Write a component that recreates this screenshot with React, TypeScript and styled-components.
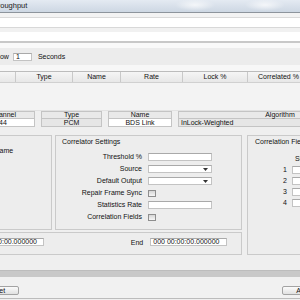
import React from 'react';
import styled, { createGlobalStyle } from 'styled-components';

const GlobalStyle = createGlobalStyle`
  html, body {
    margin: 0;
    padding: 0;
    width: 300px;
    height: 300px;
    overflow: hidden;
    background: #efefef;
  }
  body {
    font-family: "Liberation Sans", Arial, sans-serif;
    font-size: 7px;
    color: #111;
  }
  * { box-sizing: border-box; }
`;

// the window sits partly off the left edge of the screen
const Window = styled.div`
  margin-left: -60px;
  width: 440px;
  height: 300px;
  display: flex;
  flex-direction: column;
  background: #efefef;
`;

const TitleBar = styled.div`
  flex-shrink: 0;
  height: 13px;
  padding-left: 49px;
  border-bottom: 1px solid #8d949c;
  background:
    radial-gradient(ellipse 20px 6px at 255px 5px, rgba(255,255,255,0.7), transparent),
    radial-gradient(ellipse 20px 6px at 325px 5px, rgba(255,255,255,0.7), transparent),
    linear-gradient(to bottom, #e4eaf2, #cdd7e3);
  font-size: 7.5px;
  line-height: 12px;
  color: #1a1a1a;
`;

const Band = styled.div<{ $h: number; $bg: string; $line?: string; $lineW?: number }>`
  flex-shrink: 0;
  height: ${({ $h, $line, $lineW }) => $h + ($line ? $lineW || 1 : 0)}px;
  background: ${({ $bg }) => $bg};
  border-bottom: ${({ $line, $lineW }) => ($line ? `${$lineW || 1}px solid ${$line}` : 'none')};
`;

const WindowRow = styled.div`
  flex-shrink: 0;
  height: 17px;
  display: flex;
  align-items: center;
  padding-left: 44px;
  background: #ececec;
`;

const Label = styled.span<{ $gap?: number }>`
  margin-left: ${({ $gap }) => $gap || 0}px;
  white-space: nowrap;
`;

const TextBox = styled.div<{ $w: number; $ml?: number }>`
  width: ${({ $w }) => $w}px;
  height: 8px;
  margin-left: ${({ $ml }) => $ml || 0}px;
  padding-left: 2px;
  background: #fff;
  border: 1px solid #c3c3c3;
  border-top-color: #a9a9a9;
  line-height: 6px;
  white-space: nowrap;
  overflow: hidden;
`;

const TableHeader = styled.div`
  flex-shrink: 0;
  height: 10px;
  display: flex;
  background: linear-gradient(to bottom, #f5f5f5, #e7e7e7);
`;

const HeadCell = styled.div<{ $w?: number }>`
  width: ${({ $w }) => ($w ? `${$w}px` : 'auto')};
  flex: ${({ $w }) => ($w ? '0 0 auto' : '1')};
  border-right: 1px solid #c9c9c9;
  text-align: center;
  line-height: 10px;
  white-space: nowrap;
`;

const TableBody = styled.div`
  flex-shrink: 0;
  height: 29px;
  background: #f3f3f3;
  border-top: 1px solid #d0d0d0;
  border-bottom: 1px solid #e2e2e2;
`;

const ChannelGrid = styled.div`
  flex-shrink: 0;
  display: grid;
  grid-template-columns: 64px 61px 64px 204px;
  grid-template-rows: 8px 8px;
  column-gap: 6px;
  padding-left: 31px;
`;

const GridHead = styled.div`
  background: #e9e9e9;
  border: 1px solid #c4c4c4;
  text-align: center;
  line-height: 6px;
  white-space: nowrap;
`;

const GridValue = styled.div<{ $grey?: boolean; $left?: boolean }>`
  background: ${({ $grey }) => ($grey ? '#e6e6e6' : '#fff')};
  border: 1px solid #c4c4c4;
  border-top: none;
  text-align: ${({ $left }) => ($left ? 'left' : 'center')};
  padding-left: ${({ $left }) => ($left ? '2px' : '0')};
  line-height: 7px;
  white-space: nowrap;
`;

const MainArea = styled.div`
  flex-shrink: 0;
  height: 120px;
  margin-top: 8px;
  display: flex;
  gap: 5px;
`;

const LeftColumn = styled.div`
  width: 302px;
  display: flex;
  flex-direction: column;
  gap: 2px;
`;

const GroupsRow = styled.div`
  height: 95px;
  display: flex;
  gap: 3px;
`;

const Group = styled.div<{ $w?: number }>`
  width: ${({ $w }) => ($w ? `${$w}px` : 'auto')};
  flex: ${({ $w }) => ($w ? '0 0 auto' : '1')};
  border: 1px solid #cacaca;
  background: #ededed;
`;

const FrameGroup = styled(Group)`
  padding: 11px 0 0 52px;
`;

const SettingsGroup = styled(Group)`
  padding: 2px 0 0 6px;
`;

const FieldsGroup = styled(Group)`
  padding: 2px 0 0 7px;
`;

const GroupTitle = styled.div`
  line-height: 8px;
  white-space: nowrap;
`;

const Form = styled.div`
  display: grid;
  grid-template-columns: 80px 64px;
  grid-auto-rows: 8px;
  column-gap: 6px;
  row-gap: 4px;
  margin-top: 7px;
`;

const FormLabel = styled.div`
  text-align: right;
  line-height: 8px;
  white-space: nowrap;
`;

const Select = styled.div`
  display: flex;
  align-items: center;
  justify-content: flex-end;
  padding-right: 3px;
  background: #fff;
  border: 1px solid #c3c3c3;
  border-top-color: #a9a9a9;
`;

const Check = styled.div`
  width: 8px;
  height: 7px;
  align-self: center;
  border: 1px solid #8e8e8e;
  background: linear-gradient(to bottom, #d6d6d6, #f6f6f6);
`;

const FieldsGrid = styled.div`
  display: grid;
  grid-template-columns: 9px 62px;
  grid-auto-rows: 8px;
  row-gap: 3px;
  margin: 9px 0 0 28px;
`;

const FieldHead = styled.div`
  grid-column: 2;
  padding-left: 3px;
  line-height: 8px;
  margin-bottom: -2px;
`;

const FieldNum = styled.div`
  line-height: 8px;
`;

const FieldInput = styled.div`
  background: #fff;
  border: 1px solid #c3c3c3;
  border-top-color: #a9a9a9;
`;

const TimeBox = styled.div`
  height: 23px;
  display: flex;
  align-items: center;
  padding: 0 0 3px 8px;
  border: 1px solid #cacaca;
  background: #ededed;
`;

const GreyBar = styled.div`
  flex-shrink: 0;
  height: 7px;
  background: #c9c9c9;
  border-top: 1px solid #bdbdbd;
`;

const ButtonBar = styled.div`
  flex-shrink: 0;
  height: 22px;
  display: flex;
  justify-content: space-between;
  align-items: flex-start;
  padding: 9px 2px 0 33px;
  border-bottom: 1px solid #bcbcbc;
  background: #f1f1f1;
`;

const ButtonGroup = styled.div`
  display: flex;
  gap: 4px;
`;

const Button = styled.div`
  width: 46px;
  height: 9px;
  border: 1px solid #a3a3a3;
  border-radius: 2px;
  background: linear-gradient(to bottom, #fbfbfb, #e1e1e1);
  text-align: center;
  line-height: 7px;
`;

const Arrow = () => (
  <svg width="5" height="3" viewBox="0 0 5 3">
    <path d="M0 0h5L2.5 3z" fill="#333" />
  </svg>
);

const columns = [
  { name: 'Channel', w: 76 },
  { name: 'Type', w: 57 },
  { name: 'Name', w: 48 },
  { name: 'Rate', w: 62 },
  { name: 'Lock %', w: 65 },
  { name: 'Correlated %', w: 62 },
];

const App: React.FC = () => {
  return (
    <>
      <GlobalStyle />
      <Window>
        <TitleBar>Throughput</TitleBar>
        <Band $h={4} $bg="#f3f3f3" $line="#dadada" />
        <Band $h={9} $bg="#ffffff" $line="#d8d8d8" />
        <Band $h={4} $bg="#f1f1f1" />
        <Band $h={9} $bg="#ffffff" $line="#c8c8c8" $lineW={2} />
        <Band $h={5} $bg="#f9f9f9" />
        <WindowRow>
          <Label>Window</Label>
          <TextBox $w={19} $ml={4}>1</TextBox>
          <Label $gap={6}>Seconds</Label>
        </WindowRow>
        <Band $h={6} $bg="#f7f7f7" $line="#bcbcbc" />
        <TableHeader>
          {columns.map((c) => (
            <HeadCell key={c.name} $w={c.w}>{c.name}</HeadCell>
          ))}
          <HeadCell />
        </TableHeader>
        <TableBody />
        <ChannelGrid>
          <GridHead>Channel</GridHead>
          <GridHead>Type</GridHead>
          <GridHead>Name</GridHead>
          <GridHead>Algorithm</GridHead>
          <GridValue>44</GridValue>
          <GridValue $grey>PCM</GridValue>
          <GridValue>BDS Link</GridValue>
          <GridValue $grey $left>InLock-Weighted</GridValue>
        </ChannelGrid>
        <MainArea>
          <LeftColumn>
            <GroupsRow>
              <FrameGroup $w={112}>
                <GroupTitle>Frame</GroupTitle>
              </FrameGroup>
              <SettingsGroup>
                <GroupTitle>Correlator Settings</GroupTitle>
                <Form>
                  <FormLabel>Threshold %</FormLabel>
                  <TextBox $w={64} />
                  <FormLabel>Source</FormLabel>
                  <Select><Arrow /></Select>
                  <FormLabel>Default Output</FormLabel>
                  <Select><Arrow /></Select>
                  <FormLabel>Repair Frame Sync</FormLabel>
                  <Check />
                  <FormLabel>Statistics Rate</FormLabel>
                  <TextBox $w={64} />
                  <FormLabel>Correlation Fields</FormLabel>
                  <Check />
                </Form>
              </SettingsGroup>
            </GroupsRow>
            <TimeBox>
              <Label>Start</Label>
              <TextBox $w={76} $ml={4}>000 00:00:00.000000</TextBox>
              <Label $gap={87}>End</Label>
              <TextBox $w={77} $ml={7}>000 00:00:00.000000</TextBox>
            </TimeBox>
          </LeftColumn>
          <FieldsGroup>
            <GroupTitle>Correlation Fields</GroupTitle>
            <FieldsGrid>
              <FieldHead>Size</FieldHead>
              {[1, 2, 3, 4].map((n) => (
                <React.Fragment key={n}>
                  <FieldNum>{n}</FieldNum>
                  <FieldInput />
                </React.Fragment>
              ))}
            </FieldsGrid>
          </FieldsGroup>
        </MainArea>
        <Band $h={15} $bg="#efefef" />
        <GreyBar />
        <ButtonBar>
          <Button>Reset</Button>
          <ButtonGroup>
            <Button>Apply</Button>
            <Button>Close</Button>
          </ButtonGroup>
        </ButtonBar>
      </Window>
    </>
  );
};

export default App;
